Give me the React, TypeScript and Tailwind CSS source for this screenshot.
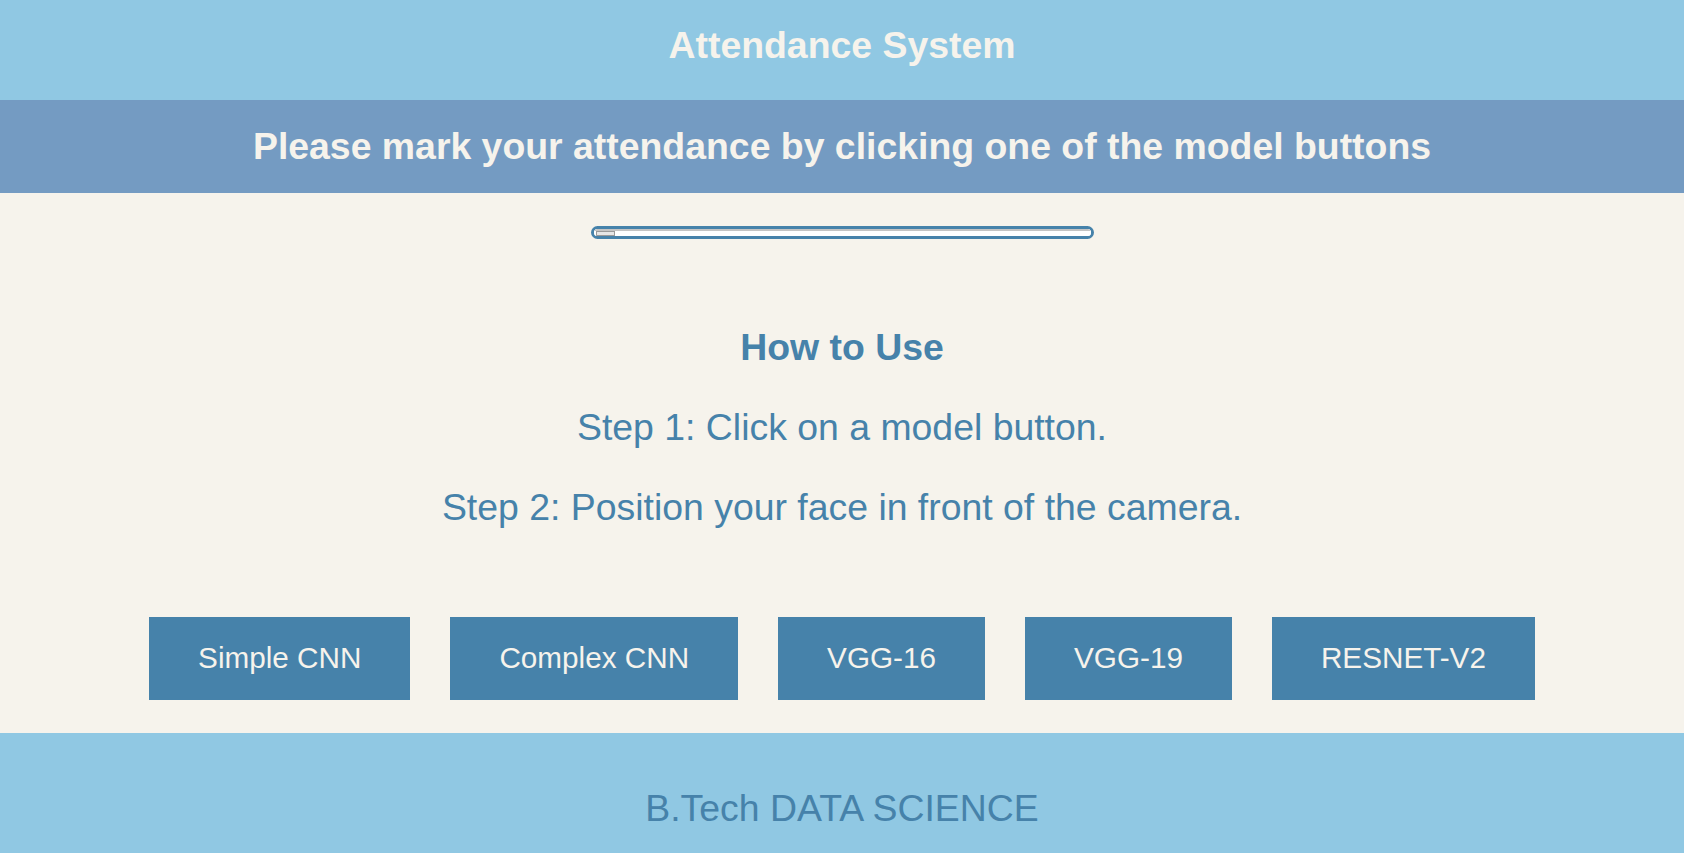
import React from "react";

const models = ["Simple CNN", "Complex CNN", "VGG-16", "VGG-19", "RESNET-V2"];

export default function App() {
  return (
    <div className="min-h-[853px] flex flex-col bg-[#f6f3ec] font-['Liberation_Sans',Arial,sans-serif]">
      <header className="h-[100px] bg-[#90c8e3] flex justify-center pt-[24px]">
        <h1 className="text-[37.4px] leading-[43px] font-bold text-[#f6f3ec]">Attendance System</h1>
      </header>
      <div className="h-[93px] bg-[#749bc2] flex justify-center pt-[24.5px]">
        <h2 className="text-[37.4px] leading-[43px] font-bold text-[#f6f3ec]">
          Please mark your attendance by clicking one of the model buttons
        </h2>
      </div>
      <main className="flex flex-col items-center pt-[33px] pb-[33px]">
        <div className="w-[503px] h-[13px] rounded-full border-[3px] border-[#4682aa] bg-white overflow-hidden flex">
          <div className="relative w-full h-full border-t-[2px] border-[#c4c4c4] bg-white">
            <div className="absolute left-[2px] top-[0px] w-[19px] h-[5px] border border-[#9a9a9a] bg-[#e6e6e6]" />
          </div>
        </div>
        <h3 className="mt-[87px] text-[37.4px] leading-[43px] font-bold text-[#4682aa]">How to Use</h3>
        <p className="mt-[36.5px] text-[37.4px] leading-[43px] text-[#4682aa]">Step 1: Click on a model button.</p>
        <p className="mt-[37px] text-[37.4px] leading-[43px] text-[#4682aa]">
          Step 2: Position your face in front of the camera.
        </p>
        <div className="mt-[88.5px] flex gap-[40px]">
          {models.map((m) => (
            <button
              key={m}
              className="h-[83px] px-[49px] bg-[#4682aa] text-[#f6f3ec] text-[29.7px] leading-[34px] pb-[2px]"
            >
              {m}
            </button>
          ))}
        </div>
      </main>
      <footer className="flex-1 bg-[#90c8e3] flex justify-center pt-[54px] pb-[32px]">
        <p className="text-[37.4px] leading-[43px] text-[#4682aa]">B.Tech DATA SCIENCE</p>
      </footer>
    </div>
  );
}
